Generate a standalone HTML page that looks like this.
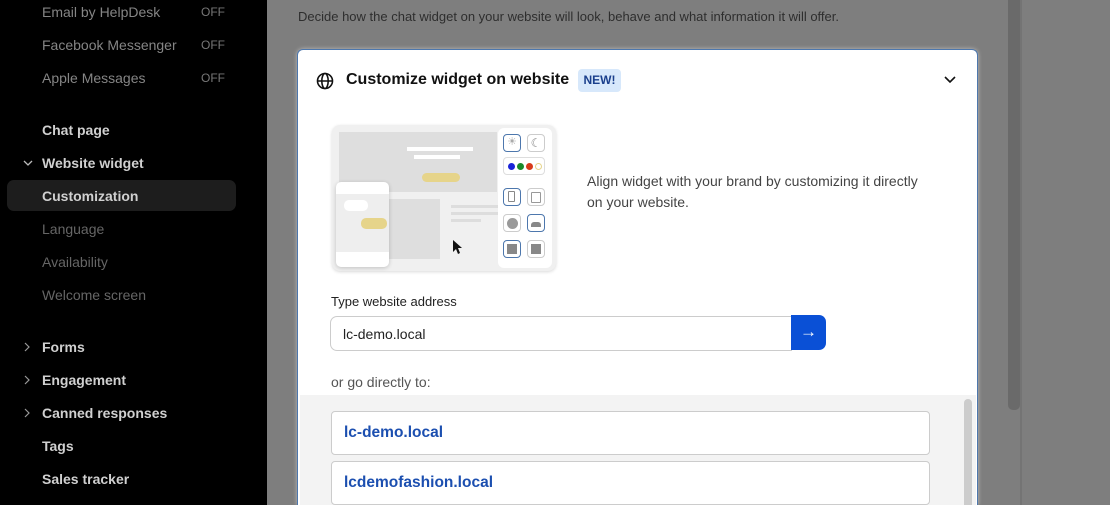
<!DOCTYPE html>
<html style="width:1110px;height:505px;overflow:hidden"><head><style>
*{margin:0;padding:0;box-sizing:border-box}
body{width:1110px;height:505px;overflow:hidden;background:#7e7e7e;font-family:"Liberation Sans",sans-serif;position:relative}
.side{position:absolute;left:0;top:0;width:267px;height:505px;background:#000}
.it{position:absolute;left:42px;font-size:14px;color:#a0a0a0}
.b{color:#d0d0d0;font-weight:bold}
.d{color:#666}
.off{position:absolute;left:201px;font-size:12px;color:#777}
.sel{position:absolute;left:7px;top:180px;width:229px;height:31px;background:#1d1d1d;border-radius:7px}
.card{position:absolute;left:297px;top:49px;width:681px;height:456px;background:#fff;border:1px solid #4d77ad;border-bottom:none;border-radius:6px 6px 0 0;overflow:hidden;box-shadow:0 0 4px rgba(255,255,255,.5)}
</style></head><body>
<div class="side">
<div class="it" style="top:4px;color:#858585">Email by HelpDesk</div><div class="off" style="top:5px">OFF</div>
<div class="it" style="top:37px;color:#858585">Facebook Messenger</div><div class="off" style="top:38px">OFF</div>
<div class="it" style="top:70px;color:#858585">Apple Messages</div><div class="off" style="top:71px">OFF</div>
<div class="it b" style="top:122px">Chat page</div>
<svg style="position:absolute;left:22px;top:158px" width="12" height="10"><path d="M2 3l4 4 4-4" stroke="#bbb" fill="none" stroke-width="1.3"/></svg>
<div class="it b" style="top:155px">Website widget</div>
<div class="sel"></div>
<div class="it b" style="top:188px">Customization</div>
<div class="it d" style="top:221px">Language</div>
<div class="it d" style="top:254px">Availability</div>
<div class="it d" style="top:287px">Welcome screen</div>
<svg style="position:absolute;left:22px;top:341px" width="10" height="12"><path d="M3 2l4 4-4 4" stroke="#999" fill="none" stroke-width="1.2"/></svg>
<div class="it b" style="top:339px">Forms</div>
<svg style="position:absolute;left:22px;top:374px" width="10" height="12"><path d="M3 2l4 4-4 4" stroke="#999" fill="none" stroke-width="1.2"/></svg>
<div class="it b" style="top:372px">Engagement</div>
<svg style="position:absolute;left:22px;top:407px" width="10" height="12"><path d="M3 2l4 4-4 4" stroke="#999" fill="none" stroke-width="1.2"/></svg>
<div class="it b" style="top:405px">Canned responses</div>
<div class="it b" style="top:438px">Tags</div>
<div class="it b" style="top:471px">Sales tracker</div>
</div>
<div style="position:absolute;left:298px;top:9px;font-size:13px;color:#2e2e2e">Decide how the chat widget on your website will look, behave and what information it will offer.</div>
<div style="position:absolute;left:1008px;top:0;width:12px;height:410px;background:#6a6a6a;border-radius:0 0 5px 5px"></div>
<div style="position:absolute;left:1020px;top:0;width:2px;height:505px;background:#747474"></div>
<div class="card">
<svg style="position:absolute;left:18px;top:22px" width="18" height="18" viewBox="0 0 18 18" fill="none" stroke="#111" stroke-width="1.6"><circle cx="9" cy="9" r="7.5"/><ellipse cx="9" cy="9" rx="3.2" ry="7.5"/><path d="M1.5 9h15"/></svg>
<div style="position:absolute;left:48px;top:21px;font-size:16px;font-weight:bold;color:#111">Customize widget on website</div>
<div style="position:absolute;left:280px;top:19px;width:43px;height:23px;background:#d7e8fb;border-radius:4px;font-size:12px;font-weight:bold;color:#1a3f8c;text-align:center;line-height:23px">NEW!</div>
<svg style="position:absolute;left:645px;top:25px" width="14" height="10"><path d="M2 2l5 5 5-5" stroke="#111" fill="none" stroke-width="1.6"/></svg>
<div style="position:absolute;left:34px;top:75px;width:224px;height:146px;background:#f0f0f0;border-radius:8px;box-shadow:0 1px 3px rgba(0,0,0,.15)">
 <div style="position:absolute;left:7px;top:7px;width:158px;height:60px;background:#dedede"></div>
 <div style="position:absolute;left:75px;top:22px;width:66px;height:4px;background:#fff"></div>
 <div style="position:absolute;left:82px;top:30px;width:46px;height:4px;background:#fff"></div>
 <div style="position:absolute;left:90px;top:48px;width:38px;height:9px;background:#e6d48a;border-radius:5px"></div>
 <div style="position:absolute;left:53px;top:74px;width:55px;height:60px;background:#dedede"></div>
 <div style="position:absolute;left:119px;top:80px;width:50px;height:3px;background:#ddd"></div>
 <div style="position:absolute;left:119px;top:87px;width:50px;height:3px;background:#ddd"></div>
 <div style="position:absolute;left:119px;top:94px;width:30px;height:3px;background:#ddd"></div>
 <div style="position:absolute;left:4px;top:57px;width:53px;height:85px;background:#fff;border-radius:5px;box-shadow:0 1px 4px rgba(0,0,0,.2)"><div style="position:absolute;left:0;top:12px;width:53px;height:58px;background:#eee"></div><div style="position:absolute;left:8px;top:18px;width:24px;height:11px;background:#fff;border-radius:5px"></div><div style="position:absolute;left:25px;top:36px;width:26px;height:11px;background:#e6d48a;border-radius:5px"></div></div>
 <div style="position:absolute;left:166px;top:3px;width:54px;height:140px;background:#fff;border-radius:6px"></div>
 <div style="position:absolute;left:171px;top:9px;width:18px;height:18px;border:1.5px solid #4d77ad;border-radius:4px;text-align:center;font-size:11px;color:#aaa;line-height:15px">☀</div>
 <div style="position:absolute;left:195px;top:9px;width:18px;height:18px;border:1px solid #ccc;border-radius:4px;text-align:center;font-size:12px;color:#888;line-height:16px">☾</div>
 <div style="position:absolute;left:171px;top:32px;width:42px;height:18px;border:1px solid #ddd;border-radius:4px"><span style="position:absolute;left:4px;top:5px;width:7px;height:7px;border-radius:50%;background:#1a23d8"></span><span style="position:absolute;left:13px;top:5px;width:7px;height:7px;border-radius:50%;background:#1a8a2a"></span><span style="position:absolute;left:22px;top:5px;width:7px;height:7px;border-radius:50%;background:#d83a1a"></span><span style="position:absolute;left:31px;top:5px;width:7px;height:7px;border-radius:50%;border:1.5px solid #e6d48a"></span></div>
 <div style="position:absolute;left:171px;top:63px;width:18px;height:18px;border:1.5px solid #4d77ad;border-radius:4px"><span style="position:absolute;left:4px;top:2px;width:7px;height:11px;border:1.5px solid #888;border-radius:1px"></span></div>
 <div style="position:absolute;left:195px;top:63px;width:18px;height:18px;border:1px solid #ccc;border-radius:4px"><span style="position:absolute;left:3px;top:3px;width:10px;height:11px;border:1.5px solid #999;border-radius:1px"></span></div>
 <div style="position:absolute;left:171px;top:89px;width:18px;height:18px;border:1px solid #ccc;border-radius:4px"><span style="position:absolute;left:3px;top:3px;width:11px;height:11px;border-radius:50%;background:#999"></span></div>
 <div style="position:absolute;left:195px;top:89px;width:18px;height:18px;border:1.5px solid #4d77ad;border-radius:4px"><span style="position:absolute;left:3px;top:7px;width:10px;height:5px;background:#888;border-radius:3px 3px 0 0"></span></div>
 <div style="position:absolute;left:171px;top:115px;width:18px;height:18px;border:1.5px solid #4d77ad;border-radius:4px"><span style="position:absolute;left:3px;top:3px;width:10px;height:10px;background:#888"></span></div>
 <div style="position:absolute;left:195px;top:115px;width:18px;height:18px;border:1px solid #ccc;border-radius:4px"><span style="position:absolute;left:3px;top:3px;width:10px;height:10px;background:#888"></span></div>
</div>
<svg style="position:absolute;left:154px;top:189px" width="10" height="16"><path d="M1 1v12l3-3 2 5 2-1-2-5h4z" fill="#111"/></svg>
<div style="position:absolute;left:289px;top:121px;width:340px;font-size:14px;line-height:21px;color:#444">Align widget with your brand by customizing it directly on your website.</div>
<div style="position:absolute;left:33px;top:244px;font-size:13px;color:#222">Type website address</div>
<div style="position:absolute;left:32px;top:266px;width:462px;height:35px;border:1px solid #ccc;border-radius:7px 0 0 7px;font-size:14px;color:#222;padding:9px 12px">lc-demo.local</div>
<div style="position:absolute;left:493px;top:265px;width:35px;height:35px;background:#0a50d6;border-radius:0 7px 7px 0;color:#fff;text-align:center;line-height:33px;font-size:17px;font-weight:bold">→</div>
<div style="position:absolute;left:33px;top:324px;font-size:14px;color:#555">or go directly to:</div>
<div style="position:absolute;left:2px;top:345px;width:676px;height:130px;background:#f3f3f3"></div>
<div style="position:absolute;left:666px;top:349px;width:8px;height:130px;background:#ccc;border-radius:4px"></div>
<div style="position:absolute;left:33px;top:361px;width:599px;height:44px;background:#fff;border:1px solid #ccc;border-radius:4px;font-size:15.5px;font-weight:bold;color:#1c4fb0;padding:12px 12px">lc-demo.local</div>
<div style="position:absolute;left:33px;top:411px;width:599px;height:44px;background:#fff;border:1px solid #ccc;border-radius:4px;font-size:15.5px;font-weight:bold;color:#1c4fb0;padding:12px 12px">lcdemofashion.local</div>
</div>
</body></html>
